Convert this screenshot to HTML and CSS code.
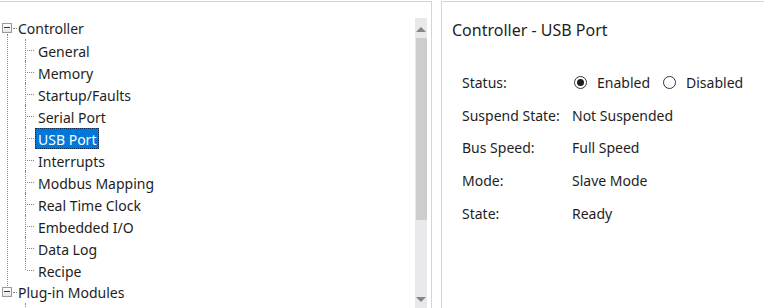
FILE: index.html
```html
<!DOCTYPE html>
<html>
<head>
<meta charset="utf-8">
<link rel="stylesheet" href="styles.css">
</head>
<body>
<div class="app">
  <div class="left-pane">
    <ul class="tree">
      <li class="root first">
        <div class="row"><span class="exp"></span><span class="label">Controller</span></div>
        <ul class="children">
          <li><span class="label">General</span></li>
          <li><span class="label">Memory</span></li>
          <li><span class="label">Startup/Faults</span></li>
          <li><span class="label">Serial Port</span></li>
          <li><span class="label selected">USB Port</span></li>
          <li><span class="label">Interrupts</span></li>
          <li><span class="label">Modbus Mapping</span></li>
          <li><span class="label">Real Time Clock</span></li>
          <li><span class="label">Embedded I/O</span></li>
          <li><span class="label">Data Log</span></li>
          <li class="last"><span class="label">Recipe</span></li>
        </ul>
      </li>
      <li class="root second">
        <div class="row"><span class="exp"></span><span class="label">Plug-in Modules</span></div>
      </li>
    </ul>
    <div class="scrollbar">
      <div class="arrow up"></div>
      <div class="thumb"></div>
      <div class="track-rest"></div>
      <div class="arrow down"></div>
    </div>
  </div>
  <div class="right-pane">
    <div class="title">Controller - USB Port</div>
    <div class="props">
      <div class="prop">
        <span class="key">Status:</span>
        <span class="val">
          <span class="radio checked"></span><span class="opt">Enabled</span>
          <span class="radio"></span><span class="opt">Disabled</span>
        </span>
      </div>
      <div class="prop"><span class="key">Suspend State:</span><span class="val">Not Suspended</span></div>
      <div class="prop"><span class="key">Bus Speed:</span><span class="val">Full Speed</span></div>
      <div class="prop"><span class="key">Mode:</span><span class="val">Slave Mode</span></div>
      <div class="prop"><span class="key">State:</span><span class="val">Ready</span></div>
    </div>
  </div>
</div>
</body>
</html>
```
FILE: styles.css
```css
* { box-sizing: border-box; }
html, body { margin: 0; padding: 0; background: #fff; }
body {
  font-family: "Noto Sans", "Open Sans", sans-serif;
  font-size: 14px;
  color: #1e1e1e;
  width: 764px;
  height: 308px;
  overflow: hidden;
}
.app {
  display: flex;
  height: 308px;
  padding-top: 1px;
  overflow: hidden;
}
.left-pane {
  width: 432px;
  border-top: 1px solid #c9dada;
  border-right: 1px solid #c9dada;
  display: flex;
  height: 307px;
  overflow: hidden;
}
.tree {
  list-style: none;
  margin: 0;
  padding: 15px 0 0 0;
  flex: 1;
  overflow: hidden;
}
.tree ul { list-style: none; margin: 0; padding: 0; }
.root { position: relative; }
.row {
  height: 22px;
  display: flex;
  align-items: center;
  padding-left: 2px;
}
.exp {
  width: 10px;
  height: 10px;
  border: 1px solid #9a9a9a;
  background: linear-gradient(#fff, #e6e6e6);
  position: relative;
  flex: none;
}
.exp::after {
  content: "";
  position: absolute;
  left: 1px;
  right: 1px;
  top: 3px;
  border-top: 1px solid #333;
}
.row .exp + .label { margin-left: 6px; position: relative; }
.row .exp + .label::before {
  content: "";
  position: absolute;
  left: -5px;
  top: 50%;
  width: 4px;
  border-top: 1px dotted #888;
}
.root.first::before {
  content: "";
  position: absolute;
  left: 7px;
  top: 17px;
  bottom: -5px;
  border-left: 1px dotted #888;
}
.root.second::after {
  content: "";
  position: absolute;
  left: 25px;
  top: 22px;
  height: 20px;
  border-left: 1px dotted #888;
}
.children li {
  position: relative;
  height: 22px;
  padding-left: 35px;
  display: flex;
  align-items: center;
}
.children li::before {
  content: "";
  position: absolute;
  left: 25px;
  top: 0;
  bottom: 0;
  border-left: 1px dotted #888;
}
.children li.last::before { bottom: 11px; }
.children li::after {
  content: "";
  position: absolute;
  left: 27px;
  top: 11px;
  width: 7px;
  border-top: 1px dotted #888;
}
.children .label {
  padding: 0 2px;
  height: 21px;
  line-height: 21px;
  border: 1px solid transparent;
}
.children .label.selected {
  background: #0078d7;
  color: #fff;
  border: 1px dotted #0a2a55;
}
.scrollbar {
  width: 12px;
  margin: 16px 4px 0 0;
  background: #e9e9ec;
  display: flex;
  flex-direction: column;
  align-items: center;
}
.arrow {
  width: 0;
  height: 0;
  border-left: 5px solid transparent;
  border-right: 5px solid transparent;
}
.arrow.up { border-bottom: 5px solid #858585; margin-top: 9px; }
.arrow.down { border-top: 5px solid #858585; margin-bottom: 6px; }
.thumb {
  width: 11px;
  height: 182px;
  background: #cdcdcd;
  margin-top: 6px;
}
.track-rest { flex: 1; }
.right-pane {
  flex: 1;
  margin-left: 9px;
  border-top: 1px solid #c9dada;
  border-left: 1px solid #c9dada;
  padding: 17px 0 0 10px;
}
.title {
  font-size: 16px;
  line-height: 22px;
}
.props {
  margin-top: 25px;
  padding-left: 10px;
}
.prop {
  display: flex;
  align-items: center;
  height: 32.75px;
}
.key { width: 110px; flex: none; }
.val { display: flex; align-items: center; }
.radio {
  width: 13px;
  height: 13px;
  border: 1px solid #333;
  border-radius: 50%;
  margin-left: 2px;
  margin-right: 10px;
  display: flex;
  align-items: center;
  justify-content: center;
}
.radio.checked::after {
  content: "";
  width: 7px;
  height: 7px;
  border-radius: 50%;
  background: #1e1e1e;
}
.opt { margin-right: 11px; }
```
